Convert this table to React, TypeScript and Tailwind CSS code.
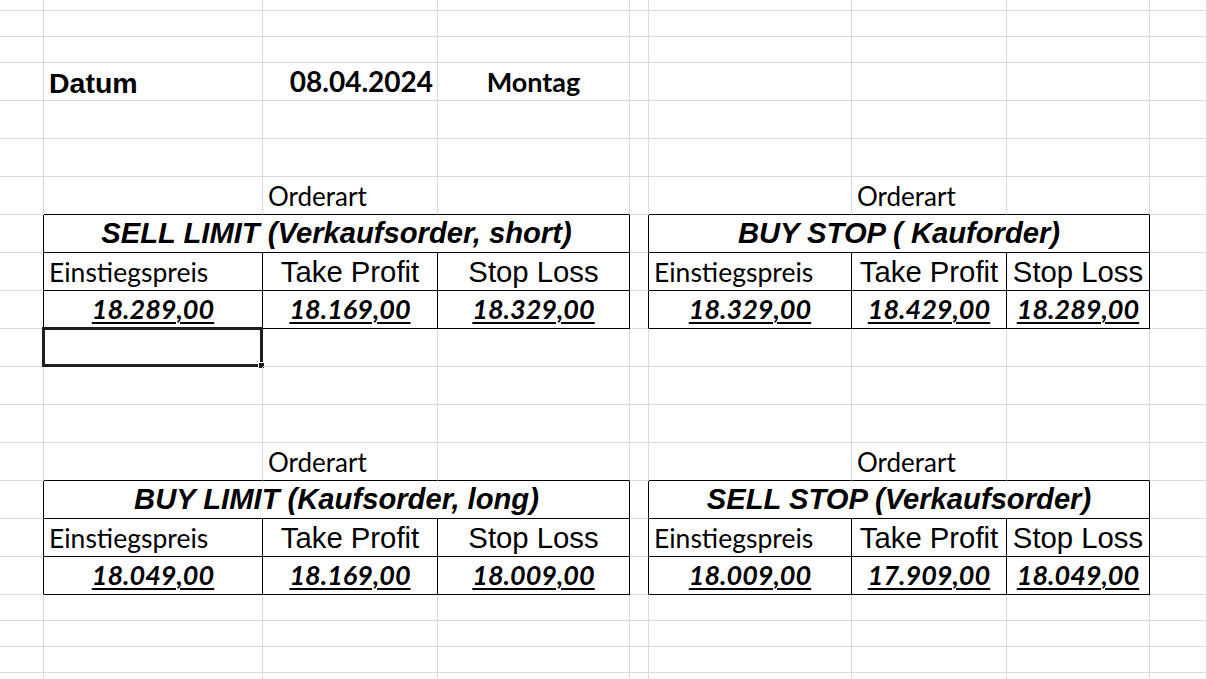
import React from "react";

const arial = "font-['Liberation_Sans',Arial,sans-serif]";
const calibri = "font-['Lato','Carlito',sans-serif]";

type Block = {
  title: string;
  values: [string, string, string];
};

type Order = { top: number; left: Block; right: Block };

const orders: Order[] = [
  {
    top: 7,
    left: { title: "SELL LIMIT (Verkaufsorder, short)", values: ["18.289,00", "18.169,00", "18.329,00"] },
    right: { title: "BUY STOP ( Kauforder)", values: ["18.329,00", "18.429,00", "18.289,00"] },
  },
  {
    top: 14,
    left: { title: "BUY LIMIT (Kaufsorder, long)", values: ["18.049,00", "18.169,00", "18.009,00"] },
    right: { title: "SELL STOP (Verkaufsorder)", values: ["18.009,00", "17.909,00", "18.049,00"] },
  },
];

const ROWS = 21;
const COLS = 9;

const inTable = (r: number) => orders.some((o) => r >= o.top && r <= o.top + 2);
const isHeader = (r: number) => orders.some((o) => r === o.top);
const isOrderart = (r: number) => orders.some((o) => r === o.top - 1);

function borders(r: number, c: number) {
  const t = inTable(r);
  const rightBlack =
    t && (c === 0 || c === 3 || c === 4 || c === 7 || (!isHeader(r) && (c === 1 || c === 2 || c === 5 || c === 6)));
  const bottomBlack = (t || isOrderart(r)) && c !== 0 && c !== 4 && c !== 8;
  return [
    "border-r border-b",
    rightBlack ? "border-r-black" : "border-r-[#dadada]",
    bottomBlack ? "border-b-black" : "border-b-[#dadada]",
  ].join(" ");
}

const Cell: React.FC<{ r: number; c: number; span?: boolean; children?: React.ReactNode }> = ({
  r,
  c,
  span,
  children,
}) => (
  <div className={`relative flex items-end whitespace-nowrap ${span ? "col-span-3" : ""} ${borders(r, c)}`}>
    {children}
  </div>
);

function content(r: number, c: number): React.ReactNode {
  if (r === 3) {
    if (c === 1) return <span className={`${arial} pl-[5px] pb-[3px] text-[28.5px] font-bold leading-none`}>Datum</span>;
    if (c === 2)
      return (
        <span className={`${calibri} w-full pr-[4px] pb-[5px] text-right text-[28px] font-bold leading-none`}>08.04.2024</span>
      );
    if (c === 3)
      return <span className={`${calibri} w-full pb-[5px] text-center text-[27px] font-bold leading-none`}>Montag</span>;
  }
  if (isOrderart(r) && (c === 2 || c === 6))
    return <span className={`${calibri} pl-[5px] pb-[5px] text-[26px] leading-none`}>Orderart</span>;
  if (c === 0 || c === 4 || c === 8) return null;
  const o = orders.find((x) => r >= x.top && r <= x.top + 2);
  if (o) {
    const block = c < 4 ? o.left : o.right;
    const idx = c < 4 ? c - 1 : c - 5;
    if (r === o.top)
      return (
        <span className={`${arial} w-full pb-[4px] text-center text-[29.2px] font-bold italic leading-none`}>{block.title}</span>
      );
    if (r === o.top + 1) {
      if (idx === 0)
        return <span className={`${calibri} pl-[5px] pb-[5px] text-[26.5px] leading-none`}>Einstiegspreis</span>;
      return (
        <span className={`${arial} w-full pb-[4px] text-center text-[29.3px] leading-none`}>
          {idx === 1 ? "Take Profit" : "Stop Loss"}
        </span>
      );
    }
    return (
      <span
        className={`${calibri} w-full pb-[6px] text-center text-[27px] font-bold italic leading-none underline decoration-2 underline-offset-[3px]`}
      >
        {block.values[idx]}
      </span>
    );
  }
  return null;
}

export default function App() {
  const cells: React.ReactNode[] = [];
  for (let r = 0; r < ROWS; r++) {
    for (let c = 0; c < COLS; c++) {
      const header = isHeader(r);
      if (header && (c === 2 || c === 3 || c === 6 || c === 7)) continue;
      const span = header && (c === 1 || c === 5);
      cells.push(
        <Cell key={`${r}-${c}`} r={r} c={span ? (c === 1 ? 3 : 7) : c} span={span}>
          {content(r, c)}
          {r === 10 && c === 1 && (
            <div className="pointer-events-none absolute -left-[2px] -top-[2px] -right-[1px] -bottom-[1px] border-[3px] border-[#1e1e1e]">
              <div className="absolute -right-[5px] -bottom-[5px] h-[7px] w-[7px] border border-white bg-[#1e1e1e]" />
            </div>
          )}
        </Cell>
      );
    }
  }

  return (
    <div className="h-screen w-full overflow-hidden bg-white text-black">
      <div className="grid grid-cols-[44px_219px_175px_192px_19px_203px_155px_143px_1fr] grid-rows-[11px_26px_26px_repeat(14,38px)_26px_26px_26px_26px]">
        {cells}
      </div>
    </div>
  );
}
